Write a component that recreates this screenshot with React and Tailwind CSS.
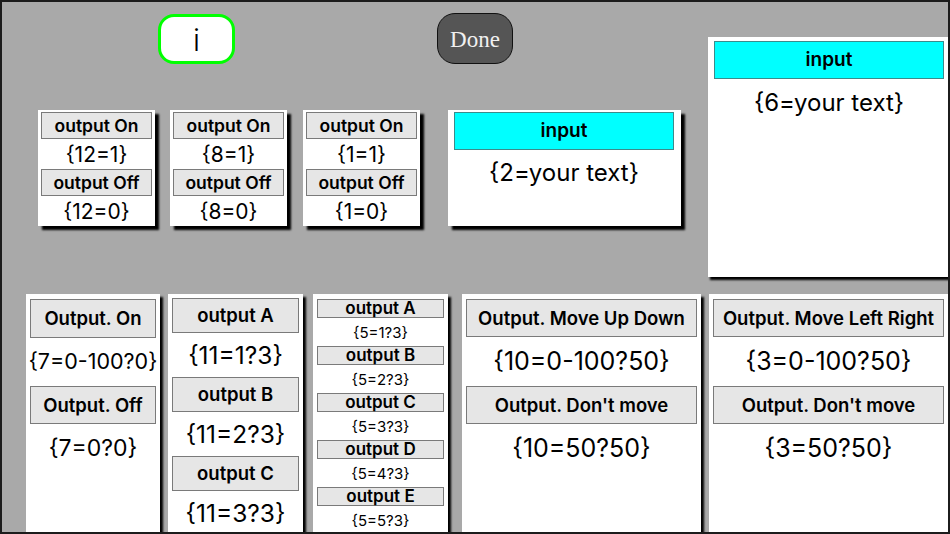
import React from 'react';

const font = { fontFamily: 'Inter, "Noto Sans", sans-serif' };

const Btn = ({ label, h, size }) => (
  <div
    className={`flex items-center justify-center bg-[#e6e6e6] border border-[#7a7a7a] text-black leading-none whitespace-nowrap ${h} ${size}`}
  >
    {label}
  </div>
);

const Value = ({ text, h, size }) => (
  <div className={`flex items-center justify-center text-black leading-none whitespace-nowrap ${h} ${size}`}>
    {text}
  </div>
);

const SmallCard = ({ id, className = '' }) => (
  <div className={`w-[117px] h-[116px] bg-white shadow-[4px_4px_2px_#000] px-[3px] pt-[2px] flex flex-col ${className}`}>
    <Btn label="output On" h="h-[27px]" size="text-[17.5px] font-semibold" />
    <Value text={`{${id}=1}`} h="h-[30px]" size="text-[21px]" />
    <Btn label="output Off" h="h-[27px]" size="text-[17.5px] font-semibold" />
    <Value text={`{${id}=0}`} h="h-[30px]" size="text-[21px]" />
  </div>
);

const InputHeader = () => (
  <div className="h-[38px] bg-[#00ffff] border border-[#3b8b8b] flex items-center justify-center text-[19px] font-semibold text-black">
    input
  </div>
);

const BigPair = ({ a, av, b, bv, className = '' }) => (
  <div className={`w-[239px] bg-white shadow-[3px_3px_2px_#000] px-[4px] pt-[5px] flex flex-col ${className}`}>
    <Btn label={a} h="h-[38px]" size="text-[18.5px] font-semibold" />
    <Value text={av} h="h-[49px]" size="text-[25px]" />
    <Btn label={b} h="h-[38px]" size="text-[18.5px] font-semibold" />
    <Value text={bv} h="h-[48px]" size="text-[25px]" />
  </div>
);

export default function App() {
  return (
    <div
      className="w-[950px] h-[534px] bg-[#a9a9a9] border-2 border-[#1c1c1c] overflow-hidden flex flex-col"
      style={font}
    >
      {/* top area */}
      <div className="h-[292px] flex shrink-0">
        <div className="w-[698px] flex flex-col">
          <div className="flex items-start pt-[11px]">
            <div className="ml-[156px] mt-[1px] pt-[3px] w-[77px] h-[50px] bg-white border-[3px] border-[#00ff00] rounded-[16px] flex items-center justify-center text-[30px] font-light text-black">
              i
            </div>
            <div
              className="ml-[202px] pt-[3px] w-[76px] h-[51px] bg-[#555555] border-[1.5px] border-[#111] rounded-[18px] flex items-center justify-center text-[23px] text-[#f0f0f0]"
              style={{ fontFamily: '"Liberation Serif", serif' }}
            >
              Done
            </div>
          </div>
          <div className="flex items-start mt-[46px]">
            <SmallCard id={12} className="ml-[36px]" />
            <SmallCard id={8} className="ml-[15px]" />
            <SmallCard id={1} className="ml-[16px]" />
            <div className="ml-[28px] w-[233px] h-[116px] bg-white shadow-[4px_4px_2px_#000] pl-[6px] pr-[7px] pt-[2px]">
              <InputHeader />
              <div className="h-[46px] flex items-center justify-center text-[24px] text-black">{'{2=your text}'}</div>
            </div>
          </div>
        </div>
        <div className="ml-[10px] mt-[35px] w-[240px] h-[240px] shrink-0 bg-white shadow-[2px_3px_2px_#000] pl-[6px] pr-[4px] pt-[4px]">
          <InputHeader />
          <div className="h-[48px] flex items-center justify-center text-[24px] text-black">{'{6=your text}'}</div>
        </div>
      </div>

      {/* bottom row */}
      <div className="flex-1 flex">
        <div className="ml-[24px] w-[134px] bg-white shadow-[3px_3px_2px_#000] px-[4px] pt-[5px] flex flex-col">
          <Btn label="Output. On" h="h-[39px]" size="text-[18.5px] font-semibold" />
          <Value text="{7=0-100?0}" h="h-[48px]" size="text-[21.5px]" />
          <Btn label="Output. Off" h="h-[38px]" size="text-[18.5px] font-semibold" />
          <Value text="{7=0?0}" h="h-[48px]" size="text-[23px]" />
        </div>
        <div className="ml-[8px] w-[135px] bg-white shadow-[3px_3px_2px_#000] px-[4px] pt-[4px] flex flex-col">
          {['A', 'B', 'C'].map((l, i) => (
            <React.Fragment key={l}>
              <Btn label={`output ${l}`} h="h-[35px]" size="text-[18.5px] font-semibold" />
              <Value text={`{11=${i + 1}?3}`} h="h-[44px]" size="text-[24.5px]" />
            </React.Fragment>
          ))}
        </div>
        <div className="ml-[10px] w-[135px] bg-white shadow-[3px_3px_2px_#000] px-[4px] pt-[5px] flex flex-col">
          {['A', 'B', 'C', 'D', 'E'].map((l, i) => (
            <React.Fragment key={l}>
              <Btn label={`output ${l}`} h="h-[19px]" size="text-[17px] font-semibold" />
              <Value text={`{5=${i + 1}?3}`} h="h-[28px]" size="text-[15px]" />
            </React.Fragment>
          ))}
        </div>
        <BigPair
          className="ml-[14px]"
          a="Output. Move Up Down"
          av="{10=0-100?50}"
          b="Output. Don't move"
          bv="{10=50?50}"
        />
        <BigPair
          className="ml-[8px]"
          a="Output. Move Left Right"
          av="{3=0-100?50}"
          b="Output. Don't move"
          bv="{3=50?50}"
        />
      </div>
    </div>
  );
}
